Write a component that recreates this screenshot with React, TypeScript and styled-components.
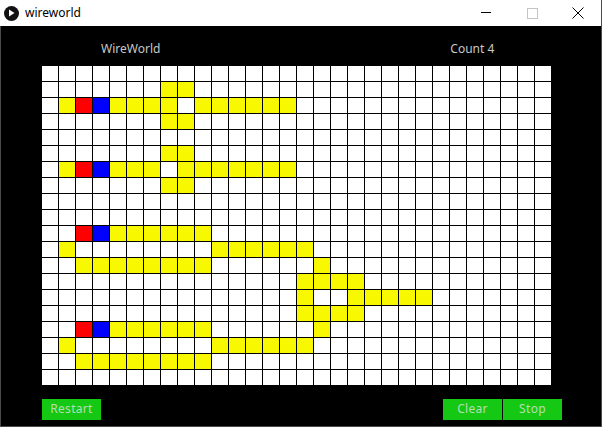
import React from "react";
import styled, { createGlobalStyle } from "styled-components";

const Global = createGlobalStyle`
  html, body { margin: 0; padding: 0; background: #fff; }
  body { font-family: "Noto Sans", "DejaVu Sans", sans-serif; }
`;

type Cell = "." | "Y" | "R" | "B";
const COLS = 30;
const ROWS = 20;

const spans: [number, number, number, Cell][] = [
  [1, 7, 8, "Y"],
  [2, 1, 1, "Y"], [2, 2, 2, "R"], [2, 3, 3, "B"], [2, 4, 7, "Y"], [2, 9, 14, "Y"],
  [3, 7, 8, "Y"],
  [5, 7, 8, "Y"],
  [6, 1, 1, "Y"], [6, 2, 2, "R"], [6, 3, 3, "B"], [6, 4, 6, "Y"], [6, 8, 14, "Y"],
  [7, 7, 8, "Y"],
  [10, 2, 2, "R"], [10, 3, 3, "B"], [10, 4, 9, "Y"],
  [11, 1, 1, "Y"], [11, 10, 15, "Y"],
  [12, 2, 9, "Y"], [12, 16, 16, "Y"],
  [13, 15, 18, "Y"],
  [14, 15, 15, "Y"], [14, 18, 22, "Y"],
  [15, 15, 18, "Y"],
  [16, 2, 2, "R"], [16, 3, 3, "B"], [16, 4, 9, "Y"], [16, 16, 16, "Y"],
  [17, 1, 1, "Y"], [17, 10, 15, "Y"],
  [18, 2, 9, "Y"],
];

const buildGrid = (): Cell[][] => {
  const g: Cell[][] = Array.from({ length: ROWS }, () => Array<Cell>(COLS).fill("."));
  spans.forEach(([r, a, b, t]) => {
    for (let c = a; c <= b; c++) g[r][c] = t;
  });
  return g;
};

const colors: Record<Cell, string> = {
  ".": "#ffffff",
  Y: "#f8f800",
  R: "#ff0000",
  B: "#0000ff",
};

const Window = styled.div`
  width: 602px;
  height: 427px;
  display: flex;
  flex-direction: column;
  box-sizing: border-box;
  overflow: hidden;
`;

const TitleBar = styled.div`
  height: 26px;
  background: #ffffff;
  display: flex;
  align-items: center;
  border-right: 1px solid #4a4a4a;
  box-sizing: border-box;
`;

const AppIcon = styled.div`
  width: 15px;
  height: 15px;
  margin-left: 4px;
  border-radius: 50%;
  background: #111;
  display: flex;
  align-items: center;
  justify-content: center;
`;

const Title = styled.div`
  margin-left: 6px;
  font-family: "Noto Sans", "Open Sans", sans-serif;
  font-size: 12px;
  color: #000;
  flex: 1;
  line-height: 26px;
`;

const Ctrl = styled.div`
  width: 46px;
  height: 26px;
  display: flex;
  align-items: center;
  justify-content: center;
`;

const Body = styled.div`
  flex: 1;
  background: #000;
  border: 1px solid #4a4a4a;
  border-top: none;
  display: flex;
  flex-direction: column;
  padding-left: 41px;
`;

const Header = styled.div`
  height: 40px;
  box-sizing: border-box;
  padding-top: 4px;
  display: flex;
  align-items: center;
`;

const Label = styled.div<{ $left: number }>`
  margin-left: ${(p) => p.$left}px;
  font-family: "Noto Sans", "Open Sans", sans-serif;
  font-size: 12px;
  color: #c8c8c8;
`;

const Grid = styled.div`
  display: grid;
  grid-template-columns: repeat(${COLS}, 16px);
  grid-template-rows: repeat(${ROWS}, 15px);
  gap: 1px;
  width: 509px;
  background: #000;
`;

const Square = styled.div<{ $c: string }>`
  background: ${(p) => p.$c};
`;

const Buttons = styled.div`
  display: flex;
  margin-top: 14px;
  width: 520px;
`;

const Btn = styled.div`
  width: 59px;
  height: 21px;
  box-sizing: border-box;
  padding-bottom: 3px;
  background: #14c814;
  color: #b4deb4;
  font-family: "Noto Sans", "Open Sans", sans-serif;
  font-size: 12px;
  display: flex;
  align-items: center;
  justify-content: center;
  letter-spacing: 0.3px;
`;

const Spacer = styled.div`
  flex: 1;
`;

const Gap = styled.div`
  width: 1px;
`;

export default function App() {
  const grid = buildGrid();
  return (
    <>
      <Global />
      <Window>
        <TitleBar>
          <AppIcon>
            <svg width="7" height="8" viewBox="0 0 7 8">
              <path d="M1 0.5 L6.5 4 L1 7.5 Z" fill="#fff" />
            </svg>
          </AppIcon>
          <Title>wireworld</Title>
          <Ctrl>
            <svg width="12" height="2" viewBox="0 0 12 2">
              <rect x="1" y="0" width="10" height="1" fill="#000" />
            </svg>
          </Ctrl>
          <Ctrl>
            <svg width="11" height="11" viewBox="0 0 11 11">
              <rect x="0.5" y="0.5" width="10" height="10" fill="none" stroke="#c4c4c4" />
            </svg>
          </Ctrl>
          <Ctrl>
            <svg width="12" height="12" viewBox="0 0 12 12">
              <path d="M0.5 0.5 L11.5 11.5 M11.5 0.5 L0.5 11.5" stroke="#000" strokeWidth="1" />
            </svg>
          </Ctrl>
        </TitleBar>
        <Body>
          <Header>
            <Label $left={59}>WireWorld</Label>
            <Label $left={290}>Count 4</Label>
          </Header>
          <Grid>
            {grid.flatMap((row, r) =>
              row.map((c, i) => <Square key={`${r}-${i}`} $c={colors[c]} />)
            )}
          </Grid>
          <Buttons>
            <Btn>Restart</Btn>
            <Spacer />
            <Btn>Clear</Btn>
            <Gap />
            <Btn>Stop</Btn>
          </Buttons>
        </Body>
      </Window>
    </>
  );
}
